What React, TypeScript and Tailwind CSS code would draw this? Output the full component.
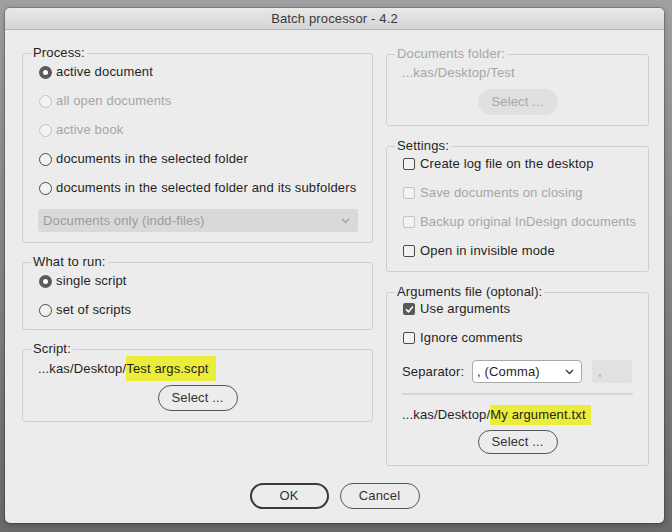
import React from 'react';

const font = { fontFamily: '"Liberation Sans", Arial, sans-serif' };

const Radio: React.FC<{ checked?: boolean; disabled?: boolean; label: string }> = ({ checked, disabled, label }) => (
    <div className="flex items-center h-[24px] gap-[4px]">
        {checked ? (
            <span className="w-[13px] h-[13px] rounded-full bg-[#5a5a5a] flex items-center justify-center shrink-0">
                <span className="w-[5px] h-[5px] rounded-full bg-white" />
            </span>
        ) : (
            <span className={`w-[13px] h-[13px] rounded-full border shrink-0 bg-[#f2f2f2] ${disabled ? 'border-[#c4c4c4]' : 'border-[#4a4a4a]'}`} />
        )}
        <span className={disabled ? 'text-[#a6a6a6]' : 'text-[#1f1f1f]'}>{label}</span>
    </div>
);

const Check: React.FC<{ checked?: boolean; disabled?: boolean; label: string; h?: string }> = ({ checked, disabled, label, h = 'h-[22px]' }) => (
    <div className={`flex items-center gap-[5px] ${h}`}>
        {checked ? (
            <span className="w-[12px] h-[12px] rounded-[2px] bg-[#5a5a5a] flex items-center justify-center shrink-0">
                <svg width="9" height="9" viewBox="0 0 9 9">
                    <path d="M1.5 4.8 L3.6 6.8 L7.5 2" fill="none" stroke="white" strokeWidth="1.6" strokeLinecap="round" strokeLinejoin="round" />
                </svg>
            </span>
        ) : (
            <span className={`w-[12px] h-[12px] rounded-[2px] border shrink-0 bg-[#f2f2f2] ${disabled ? 'border-[#c4c4c4]' : 'border-[#4a4a4a]'}`} />
        )}
        <span className={disabled ? 'text-[#a6a6a6]' : 'text-[#1f1f1f]'}>{label}</span>
    </div>
);

const Group: React.FC<{ title: string; disabled?: boolean; className: string; children: React.ReactNode }> = ({ title, disabled, className, children }) => (
    <fieldset className={`border border-[#cfcfcf] rounded-[3px] px-[8px] ${className}`}>
        <legend className={`px-[2px] leading-[14px] ${disabled ? 'text-[#a6a6a6]' : 'text-[#1f1f1f]'}`}>{title}</legend>
        <div className="pl-[8px]">{children}</div>
    </fieldset>
);

const Chevron: React.FC<{ color: string }> = ({ color }) => (
    <svg width="9" height="6" viewBox="0 0 9 6">
        <path d="M1 1 L4.5 4.5 L8 1" fill="none" stroke={color} strokeWidth="1.3" />
    </svg>
);

export default function App() {
    return (
        <div className="w-[672px] h-[532px] bg-gradient-to-b from-[#a0a0a3] to-[#6b6b6d] pt-[8px] pl-[5px] text-[13px] tracking-[0.15px]" style={font}>
            <div className="w-[659px] h-[515px] rounded-[5px] bg-[#ececec] overflow-hidden flex flex-col shadow-[0_0_0_1px_rgba(0,0,0,0.18),0_2px_6px_rgba(0,0,0,0.25)]">
                {/* title bar */}
                <div className="h-[22px] shrink-0 bg-gradient-to-b from-[#e9e9e9] to-[#d4d4d4] border-b border-[#b3b3b3] flex items-center justify-center text-[#3a3a3a]">
                    Batch processor - 4.2
                </div>

                <div className="pt-[16px] pl-[17px] pr-[15px]">
                    <div className="flex gap-[13px] h-[420px]">
                        {/* left column */}
                        <div className="w-[351px] flex flex-col">
                            <Group title="Process:" className="h-[197px]">
                                <div className="flex flex-col gap-[5px]">
                                    <Radio checked label="active document" />
                                    <Radio disabled label="all open documents" />
                                    <Radio disabled label="active book" />
                                    <Radio label="documents in the selected folder" />
                                    <Radio label="documents in the selected folder and its subfolders" />
                                </div>
                                <div className="mt-[9px] -ml-[1px] w-[320px] h-[23px] rounded-[3px] bg-[#d9d9d9] flex items-center justify-between pl-[5px] pr-[8px] text-[#9c9c9c]">
                                    <span>Documents only (indd-files)</span>
                                    <Chevron color="#9c9c9c" />
                                </div>
                            </Group>

                            <Group title="What to run:" className="h-[75px] mt-[12px]">
                                <div className="flex flex-col gap-[5px]">
                                    <Radio checked label="single script" />
                                    <Radio label="set of scripts" />
                                </div>
                            </Group>

                            <Group title="Script:" className="h-[80px] mt-[12px]">
                                <div className="h-[25px] flex items-center -ml-[1px] text-[#1f1f1f]">
                                    <span>...kas/Desktop/</span>
                                    <span className="bg-[#ecec3b] h-[25px] flex items-center pr-[7px]">Test args.scpt</span>
                                </div>
                                <div className="flex justify-center -ml-[8px] mt-[4px]">
                                    <button className="w-[80px] h-[26px] rounded-full border border-[#555] text-[#333]">Select ...</button>
                                </div>
                            </Group>
                        </div>

                        {/* right column */}
                        <div className="w-[263px] flex flex-col mt-[1px]">
                            <Group title="Documents folder:" disabled className="h-[79px]">
                                <div className="h-[24px] flex items-center -ml-[1px] text-[#a6a6a6]">...kas/Desktop/Test</div>
                                <div className="flex justify-center -ml-[8px] mt-[4px]">
                                    <button className="w-[80px] h-[26px] rounded-full bg-[#e0e0e0] text-[#a6a6a6]">Select ...</button>
                                </div>
                            </Group>

                            <Group title="Settings:" className="h-[133px] mt-[13px]">
                                <div className="flex flex-col gap-[7px]">
                                    <Check label="Create log file on the desktop" />
                                    <Check disabled label="Save documents on closing" />
                                    <Check disabled label="Backup original InDesign documents" />
                                    <Check label="Open in invisible mode" />
                                </div>
                            </Group>

                            <Group title="Arguments file (optonal):" className="h-[181px] mt-[13px]">
                                <div className="flex flex-col gap-[9px]">
                                    <Check checked label="Use arguments" h="h-[20px]" />
                                    <Check label="Ignore comments" h="h-[20px]" />
                                </div>
                                <div className="flex items-center mt-[12px] h-[23px] -ml-[1px]">
                                    <span className="text-[#1f1f1f] w-[70px]">Separator:</span>
                                    <div className="w-[110px] h-[23px] bg-white border border-[#a9a9a9] rounded-[4px] flex items-center justify-between pl-[4px] pr-[7px] text-[#1f1f1f]">
                                        <span>, (Comma)</span>
                                        <Chevron color="#333" />
                                    </div>
                                    <div className="w-[40px] h-[23px] ml-[10px] bg-[#e1e1e1] rounded-[3px] flex items-center pl-[6px] text-[#9c9c9c]">,</div>
                                </div>
                                <div className="mt-[10px] -ml-[1px] w-[231px] h-[2px] bg-[#d6d6d6]" />
                                <div className="h-[20px] mt-[10px] flex items-center -ml-[1px] text-[#1f1f1f]">
                                    <span>...kas/Desktop/</span>
                                    <span className="bg-[#ecec3b] h-[20px] flex items-center pr-[5px]">My argument.txt</span>
                                </div>
                                <div className="flex justify-center -ml-[8px] mt-[5px]">
                                    <button className="w-[80px] h-[24px] rounded-full border border-[#555] text-[#333]">Select ...</button>
                                </div>
                            </Group>
                        </div>
                    </div>

                    <div className="flex justify-center gap-[11px] mt-[17px] pr-[2px]">
                        <button className="w-[79px] h-[26px] rounded-full border-2 border-[#3a3a3a] text-[#333]">OK</button>
                        <button className="w-[80px] h-[26px] rounded-full border border-[#555] text-[#333]">Cancel</button>
                    </div>
                </div>
            </div>
        </div>
    );
}
